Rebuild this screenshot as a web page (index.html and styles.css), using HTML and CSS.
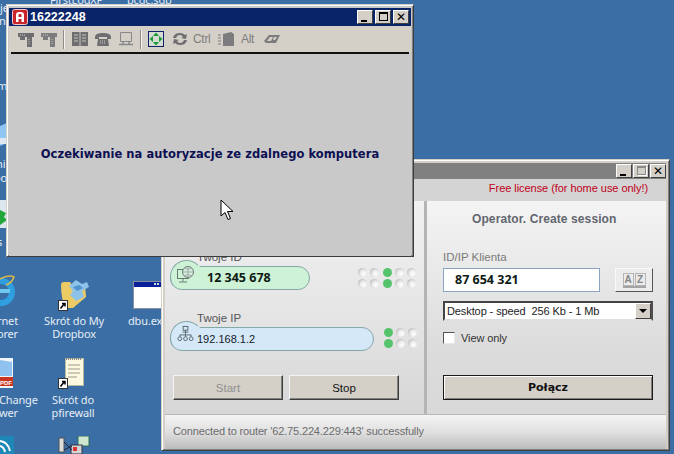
FILE: index.html
```html
<!DOCTYPE html>
<html lang="pl">
<head>
<meta charset="utf-8">
<title>Zdalny pulpit</title>
<link rel="stylesheet" href="styles.css">
</head>
<body>
<div class="desktop">
  <div class="dtext t-top1">FirstLogXP</div>
  <div class="dtext t-top2">bcdc.sdb</div>
  <div class="dtext t-left1">je</div>
  <div class="dtext t-left2">ne</div>
  <div class="dtext t-left3">m</div>
  <div class="dtext t-left4">hi</div>
  <div class="dtext t-left5">oo</div>
  <div class="dtext t-left6">s</div>

  <svg class="dicon i-ie" viewBox="0 0 16 36"><circle cx="1" cy="17" r="11" fill="none" stroke="#2f9fe0" stroke-width="6"/><path d="M-10 16h20" stroke="#6fc8f0" stroke-width="4"/><path d="M-2 5q10-6 16-3-2 6-8 8" fill="none" stroke="#d9b84a" stroke-width="1.500"/></svg>
  <div class="dlabel l-ie">rnet<br>orer</div>

  <svg class="dicon i-box" viewBox="0 0 32 34">
    <path d="M3 7q0-3 3-3h6l2 3h13l1 12-13 11H8q-5-8-5-23z" fill="#eccb64"/>
    <path d="M11 8l7-6 6 4 5-2 2 5-7 4 2 6-8 4-6-6 3-4z" fill="#8dc3e8"/>
    <path d="M15 9l6-2 4 3-6 3z" fill="#4e92cf"/>
    <rect x=".5" y="22.500" width="9" height="10" fill="#fff" stroke="#333"/>
    <path d="M2.500 30.500l4-5M4 25.500h3v3" stroke="#000" fill="none" stroke-width="1.500"/>
  </svg>
  <div class="dlabel l-box">Skrót do My<br>Dropbox</div>

  <svg class="dicon i-dbu" viewBox="0 0 28 30"><rect x=".5" y=".5" width="28" height="27" fill="#fff" stroke="#8a8fa0"/><rect x="1" y="1" width="27" height="5" fill="#0a1f9a"/><rect x="21" y="2" width="2" height="2" fill="#cdd"/><rect x="24" y="2" width="2" height="2" fill="#cdd"/></svg>
  <div class="dlabel l-dbu">dbu.exe</div>

  <svg class="dicon i-pdf" viewBox="0 0 14 30"><path d="M0 0H13V30H0z" fill="#f2f6fb"/><path d="M0 2L12 4V18H0z" fill="#8fc2ee"/><rect x="0" y="19" width="13" height="9" fill="#c9361f"/><text x="0" y="26.500" class="pdf">PDF</text></svg>
  <div class="dlabel l-pdf">Change<br>wer</div>

  <svg class="dicon i-note" viewBox="0 0 26 36">
    <rect x="7.500" y="1.500" width="18" height="27" fill="#fdf8e0" stroke="#b9b9a0"/>
    <path d="M8 2h16" stroke="#888" stroke-dasharray="1 1" stroke-width="2"/>
    <path d="M10 8h12M10 12h12M10 16h12M10 20h9" stroke="#9a9a90"/>
    <rect x=".5" y="21.500" width="9" height="10" fill="#fff" stroke="#333"/>
    <path d="M2.500 29.500l4-5M4 24.500h3v3" stroke="#000" fill="none" stroke-width="1.500"/>
  </svg>
  <div class="dlabel l-note">Skrót do<br>pfirewall</div>

  <svg class="dicon i-net" viewBox="0 0 34 18"><rect x="1" y="2" width="5" height="14" fill="#ddd" stroke="#555"/><rect x="20" y="0" width="11" height="10" fill="#cfe8cf" stroke="#2f6f5a"/><rect x="13" y="9" width="11" height="9" fill="#d4d4d4" stroke="#334"/><rect x="15" y="11" width="4" height="4" fill="#d33"/><path d="M6 6l8 8M6 14l8-4" stroke="#223"/></svg>
  <svg class="dicon i-wifi" viewBox="0 0 14 18"><rect width="14" height="18" fill="#1d87b8"/><path d="M0 5q8 1 10 10M0 10q4 1 5 6" fill="none" stroke="#fff" stroke-width="2"/></svg>
  <svg class="dicon i-shield" viewBox="0 0 7 28"><rect width="7" height="28" fill="#dbe6ee"/><path d="M0 10l6 3-2 4 3 3-7 5z" fill="#22a63a"/></svg>
  <svg class="dicon i-blue" viewBox="0 0 7 26"><path d="M0 4l7-3v20l-7 3z" fill="#8fc7f2"/><path d="M0 16h7v6h-7z" fill="#dfe7f0"/></svg>

  <section class="window main">
    <header class="titlebar tb-main">
      <span class="spacer"></span>
      <span class="winbtns tight">
        <span class="wb"><i class="g-min"></i></span>
        <span class="wb dis"><i class="g-max"></i></span>
        <span class="wb"><i class="g-x">✕</i></span>
      </span>
    </header>
    <div class="license">Free license (for home use only!)</div>
    <div class="panels">
      <div class="panel-left">
        <div class="group g-id">
          <div class="glabel">Twoje ID</div>
          <div class="row">
            <div class="pill green">
              <svg class="pill-icon" viewBox="0 0 24 24"><rect x="3.500" y="8.500" width="11" height="9" fill="none" stroke="#687a72"/><circle cx="14" cy="11" r="5.500" fill="#d8ecdf" stroke="#687a72"/><path d="M14 5.500v11M8.500 11h11M10 7q4 3 8 0M10 15q4-3 8 0" fill="none" stroke="#8a9c94" stroke-width=".7"/><path d="M9 17.500v3M5 21h8" stroke="#687a72"/></svg>
              <span class="idnum">12 345 678</span>
            </div>
            <div class="leds c5">
              <i></i><i></i><i class="on"></i><i></i><i></i>
              <i></i><i></i><i class="on"></i><i></i><i></i>
            </div>
          </div>
        </div>
        <div class="group g-ip">
          <div class="glabel">Twoje IP</div>
          <div class="row">
            <div class="pill blue">
              <svg class="pill-icon net" viewBox="0 0 18 18"><rect x="6.500" y="1.500" width="5" height="4" fill="none" stroke="#56666c"/><path d="M6 7.500h6M9 5.500v5M3 10.500h12v2M3 10.500v2M9 10.500v2" fill="none" stroke="#56666c"/><circle cx="3" cy="14.500" r="2" fill="none" stroke="#56666c"/><circle cx="9" cy="14.500" r="2" fill="none" stroke="#56666c"/><circle cx="15" cy="14.500" r="2" fill="none" stroke="#56666c"/></svg>
              <span class="ipnum">192.168.1.2</span>
            </div>
            <div class="leds c3">
              <i class="on"></i><i></i><i></i>
              <i class="on"></i><i></i><i></i>
            </div>
          </div>
        </div>
        <div class="btnrow">
          <button class="btn disabled">Start</button>
          <button class="btn">Stop</button>
        </div>
      </div>
      <div class="panel-right">
        <h2 class="op-title">Operator. Create session</h2>
        <label class="idlabel">ID/IP Klienta</label>
        <div class="idrow">
          <div class="idinput">87 654 321</div>
          <button class="az"><span class="az-in"><b>A</b><b>Z</b></span></button>
        </div>
        <div class="select">
          <span class="sel-text">Desktop - speed&nbsp; 256 Kb - 1 Mb</span>
          <span class="sel-arrow"><i></i></span>
        </div>
        <div class="check"><span class="box"></span><span>View only</span></div>
        <button class="connect">Połącz</button>
      </div>
    </div>
    <footer class="status">Connected to router '62.75.224.229:443' successfully</footer>
  </section>

  <section class="window remote">
    <header class="titlebar tb-remote">
      <svg class="app-ico" viewBox="0 0 16 16"><rect x=".5" y=".5" width="15" height="15" rx="2" fill="#c9262c" stroke="#f2c9c9"/><path d="M4 13V6q0-3 3-3h2q3 0 3 3v7h-2.500v-3h-3v3zM6.500 8h3V6q0-1-1-1h-1q-1 0-1 1z" fill="#fff"/></svg>
      <span class="wintitle">16222248</span>
      <span class="spacer"></span>
      <span class="winbtns">
        <span class="wb"><i class="g-min"></i></span>
        <span class="wb"><i class="g-max"></i></span>
        <span class="wb"><i class="g-x">✕</i></span>
      </span>
    </header>
    <div class="toolbar">
      <svg class="ti" viewBox="0 0 18 18"><path d="M1 3h16v4h-2v10h-5V7H1z" fill="#6e6e70"/><path d="M3 7h5v3H3z" fill="#6e6e70"/><path d="M3 5h5M12 9v6" stroke="#c8c5bf" stroke-dasharray="1 1"/></svg>
      <svg class="ti" viewBox="0 0 18 18"><path d="M1 3h16v4h-2v10h-5V7H1z" fill="#7c7c7e"/><path d="M3 7h5v3H3z" fill="#7c7c7e"/><path d="M3 5h5M12 9v6" stroke="#c8c5bf" stroke-dasharray="1 1"/></svg>
      <span class="tsep"></span>
      <svg class="ti" viewBox="0 0 18 18"><path d="M1 2h16v14H1z" fill="#6e6e70"/><path d="M9 2v14M3 5h4M3 8h4M3 11h4M11 5h4M11 8h4M11 11h4" stroke="#c8c5bf"/></svg>
      <svg class="ti" viewBox="0 0 18 18"><path d="M1 7q0-4 8-4t8 4v2h-4V7H5v2H1z" fill="#6e6e70"/><path d="M4 9h10l1 7H3z" fill="#6e6e70"/><path d="M6 11h6M6 13h6" stroke="#c8c5bf" stroke-dasharray="1 1"/></svg>
      <svg class="ti" viewBox="0 0 18 18"><path d="M3.500 2.500h11v9h-11z" fill="none" stroke="#88888a"/><path d="M2 14.500h14M6 12v2M12 12v2" stroke="#88888a" stroke-width="1.500"/></svg>
      <span class="tsep"></span>
      <svg class="ti full" viewBox="0 0 16 16"><rect x=".5" y=".5" width="15" height="15" fill="#d4dcd4" stroke="#10206a"/><path d="M8 1.500l3 3.500H5zM8 14.500l3-3.500H5zM1.500 8L5 5v6zM14.500 8L11 5v6z" fill="#1c9a36"/></svg>
      <svg class="ti" viewBox="0 0 18 18"><path d="M2 8q1-5 7-5 3 0 5 2l2-1-1 5-5-1 2-1q-1-2-3-2-3 0-4 3zM16 10q-1 5-7 5-3 0-5-2l-2 1 1-5 5 1-2 1q1 2 3 2 3 0 4-3z" fill="#6e6e70"/></svg>
      <span class="tword ctrl">Ctrl</span>
      <svg class="ti" viewBox="0 0 18 18"><path d="M6 4l8-2 3 2v12H6z" fill="#7c7c7e"/><path d="M1 5h3M1 8h3M1 11h3M1 14h3" stroke="#7c7c7e" stroke-width="1.200"/></svg>
      <span class="tword alt">Alt</span>
      <svg class="ti" viewBox="0 0 18 18"><path d="M1 11l5-6h11l-4 8H3z" fill="#7c7c7e"/><path d="M4 11l3-4h3l-2 4zM11 7h3l-2 3h-2z" fill="#d4d0c8"/></svg>
    </div>
    <div class="rule"></div>
    <div class="waitarea">
      <p class="waitmsg">Oczekiwanie na autoryzacje ze zdalnego komputera</p>
    </div>
    <svg class="cursor" viewBox="0 0 14 22"><path d="M1 1v16l4-3.500 3 7 2.500-1-3-7h5.500z" fill="#fff" stroke="#000"/></svg>
  </section>
</div>
</body>
</html>
```

FILE: styles.css
```css
* { box-sizing: border-box; }
html, body { margin: 0; padding: 0; }
body { width: 674px; height: 454px; overflow: hidden; font-family: "Liberation Sans", Arial, sans-serif; }

.desktop { position: relative; width: 674px; height: 454px; background: #3a6ea5; overflow: hidden; }
.dtext, .dlabel { position: absolute; color: #e6edf5; font: 11px/13px "Noto Sans", sans-serif; letter-spacing: -.15px; white-space: nowrap; }
.dlabel { text-align: center; }
.t-top1 { left: 50px; top: -7px; }
.t-top2 { left: 127px; top: -7px; }
.t-left1 { left: 0; top: 1px; }
.t-left2 { left: -1px; top: 14px; }
.t-left3 { left: -3px; top: 79px; }
.t-left4 { left: -4px; top: 157px; }
.t-left5 { left: -6px; top: 171px; }
.t-left6 { left: -3px; top: 235px; }

.pdf { fill: #fff; font: bold 6px "Liberation Sans", sans-serif; }
.dicon { position: absolute; display: block; }
.i-ie { left: 0; top: 275px; width: 16px; height: 36px; }
.l-ie { left: -14px; top: 314px; width: 32px; text-align: right; }
.i-box { left: 58px; top: 278px; width: 32px; height: 34px; }
.l-box { left: 38px; top: 314px; width: 72px; }
.i-dbu { left: 133px; top: 281px; width: 28px; height: 30px; }
.l-dbu { left: 128px; top: 314px; }
.i-pdf { left: 0; top: 358px; width: 14px; height: 30px; }
.l-pdf { left: -1px; top: 393px; text-align: left; }
.i-note { left: 58px; top: 357px; width: 26px; height: 36px; }
.l-note { left: 46px; top: 393px; width: 54px; }
.i-net { left: 58px; top: 436px; width: 34px; height: 18px; }
.i-wifi { left: 0; top: 436px; width: 14px; height: 18px; }
.i-shield { left: 0; top: 200px; width: 7px; height: 28px; }
.i-blue { left: 0; top: 122px; width: 7px; height: 26px; }

.window { position: absolute; display: flex; flex-direction: column; background: #d4d0c8; border: 1px solid; border-color: #d4d0c8 #404040 #404040 #d4d0c8; box-shadow: inset 1px 1px 0 #fff, inset -1px -1px 0 #808080; }
.main { left: 161px; top: 159px; width: 509px; height: 292px; padding: 3px 3px 1px 3px; }
.remote { left: 6px; top: 4px; width: 408px; height: 253px; background: #c9c9c9; border-color: #d4d0c8 #3c3c3c #3c3c3c #d4d0c8; padding: 3px 2px 0 2px; }

.titlebar { display: flex; align-items: center; flex: none; height: 18px; }
.tb-main { background: #808080; height: 16px; }
.tb-remote { background: #0a246a; padding: 0 2px 0 3px; }
.app-ico { width: 16px; height: 16px; flex: none; margin-right: 2px; }
.wintitle { color: #fff; font: bold 12.500px/16px "Liberation Sans", sans-serif; }
.spacer { flex: 1; }
.winbtns { display: flex; gap: 2px; }
.winbtns.tight { gap: 1px; }
.wb { position: relative; display: block; width: 16px; height: 14px; background: #d4d0c8; border: 1px solid; border-color: #fff #404040 #404040 #fff; }
.wb i { position: absolute; display: block; font-style: normal; }
.g-min { left: 3px; bottom: 1px; width: 6px; height: 2px; background: #000; }
.g-max { left: 3px; top: 1px; width: 9px; height: 9px; border: 1px solid #000; border-top-width: 2px; }
.dis .g-max { border-color: #8a8a8a; box-shadow: 1px 1px 0 #fff; }
.g-x { left: 0; top: 0; width: 14px; text-align: center; font: bold 12px/12px "DejaVu Sans", sans-serif; color: #000; }

.license { flex: none; height: 22px; background: #d4d4d4; color: #c00020; font-size: 11px; line-height: 19px; text-align: right; padding-right: 18px; letter-spacing: -.05px; }

.panels { flex: 1; display: flex; min-height: 0; }
.panel-left { width: 262px; flex: none; background: linear-gradient(#f1f1f1, #e6e6e6 50%, #d6d6d6); display: flex; flex-direction: column; padding: 50px 0 0 5px; border-right: 3px solid #b4b4b4; }
.panel-right { flex: 1; background: linear-gradient(#f4f4f4, #dcdcdc 70%, #d8d8d8); padding: 10px 2px 0 16px; display: flex; flex-direction: column; }

.group { display: flex; flex-direction: column; }
.g-ip { margin-top: 22px; }
.glabel { color: #555; font-size: 11.500px; line-height: 13px; padding-left: 27px; height: 15px; }
.row { display: flex; align-items: center; }
.pill { position: relative; flex: none; display: flex; align-items: center; height: 24px; border: 1px solid #84a8a8; border-radius: 12px; }
.pill::before { content: ""; position: absolute; left: -1px; top: -7px; width: 31px; height: 31px; border: 1px solid #84a8a8; border-radius: 50%; background: inherit; border-right-color: transparent; border-bottom-color: transparent; clip-path: inset(0 0 7px 0); }
.green { width: 140px; background: #cdf2d6; }
.blue { width: 204px; background: #d4e8f8; }
.pill-icon { position: absolute; left: 3px; top: -6px; width: 24px; height: 24px; }
.pill-icon.net { left: 6px; top: -3px; width: 17px; height: 17px; }
.idnum { position: relative; margin-left: 36px; color: #0e1a14; font: bold 12.500px/20px "Open Sans", sans-serif; }
.ipnum { position: relative; margin-left: 26px; color: #15202a; font-size: 11px; line-height: 20px; }
.leds { display: grid; gap: 2px 3.250px; grid-auto-rows: 9px; grid-template-columns: repeat(5, 9px); }
.leds.c5 { margin: -1px 0 0 48px; }
.leds.c3 { margin: -3px 0 0 9.500px; grid-template-columns: repeat(3, 9px); }
.leds i { display: block; width: 9px; height: 9px; border-radius: 50%; background: radial-gradient(circle at 65% 65%, #fff 0, #ececec 40%, #a4a4a4 100%); }
.leds i.on { background: #54c36c; }

.btnrow { display: flex; gap: 6px; margin-top: 24px; padding-left: 3px; }
.btn { width: 110px; height: 25px; padding: 0; background: #d4d0c8; border: 1px solid; border-color: #f4f4f4 #3c3c3c #3c3c3c #f4f4f4; box-shadow: inset -1px -1px 0 #808080; color: #111; font: 11.500px/20px "Liberation Sans", sans-serif; }
.btn.disabled { color: #8f8f8f; }

.op-title { margin: 0; color: #62666e; font: bold 12px/16px "Liberation Sans", sans-serif; padding-left: 29px; letter-spacing: .1px; }
.idlabel { margin-top: 23px; color: #7a7a7a; font-size: 11.500px; line-height: 14px; }
.idrow { display: flex; margin-top: 4px; }
.idinput { width: 157px; height: 24px; border: 1px solid #8aa4c2; background: #fff; color: #0e1a14; font: bold 12.500px/22px "Open Sans", sans-serif; padding-left: 11px; }
.az { width: 38px; height: 24px; margin-left: 15px; padding: 0; background: #ececec; border: 1px solid; border-color: #fafafa #555 #555 #fafafa; display: flex; align-items: center; justify-content: center; }
.az-in { display: flex; gap: 1px; border-bottom: 2px solid #a4a4a4; }
.az b { color: #85858a; width: 11px; font: bold 10px/11px "Liberation Sans", sans-serif; border: 1px solid #b4b4b4; text-align: center; }
.select { display: flex; align-items: center; width: 210px; height: 20px; margin-top: 9px; background: #fff; border: 2px solid; border-color: #444 #505050 #e0e0e0 #444; }
.sel-text { flex: 1; padding-left: 2px; color: #1c1c1c; font-size: 11px; line-height: 16px; letter-spacing: -.1px; white-space: nowrap; }
.sel-arrow { position: relative; display: block; width: 16px; height: 16px; background: #d4d0c8; border: 1px solid; border-color: #fff #404040 #404040 #fff; }
.sel-arrow i { position: absolute; left: 3px; top: 5px; width: 0; height: 0; border: 4px solid transparent; border-top: 4px solid #000; border-bottom: 0; }
.check { display: flex; align-items: center; gap: 6px; margin-top: 10px; color: #333; font-size: 11px; letter-spacing: -.1px; line-height: 14px; }
.box { display: block; width: 12px; height: 12px; background: #fff; border: 1px solid; border-color: #555 #e8e8e8 #e8e8e8 #555; }
.connect { width: 210px; height: 25px; margin-top: 30px; padding: 0; background: #d4d0c8; border: 1px solid #1a1a1a; box-shadow: inset 1px 1px 0 #fff, inset -1px -1px 0 #808080; color: #111; font: bold 11px/20px "DejaVu Sans", sans-serif; }

.status { flex: none; height: 35px; background: linear-gradient(#f4f4f4, #e0e0e0 50%, #bcbcbc); border-top: 1px solid #b8b8b8; color: #6c6c6c; font-size: 11px; letter-spacing: -.15px; line-height: 33px; padding-left: 8px; white-space: nowrap; }

.toolbar { display: flex; align-items: center; flex: none; height: 26px; gap: 5px; padding-left: 8px; background: #d4d0c8; }
.ti { width: 18px; height: 18px; flex: none; display: block; }
.ti.full { width: 16px; height: 16px; margin-right: 2px; }
.tsep { width: 1px; height: 19px; background: #8e8c88; box-shadow: 1px 0 0 #f4f4f4; margin-right: 2px; flex: none; }
.tword { flex: none; color: #7e7e7e; font-size: 12px; line-height: 18px; letter-spacing: -.3px; }
.ctrl { width: 18px; margin: 0 1px 0 -1px; }
.alt { width: 17px; margin-left: 1px; }
.rule { flex: none; height: 2px; background: #111; margin: 0 2px; }
.waitarea { flex: 1; display: flex; align-items: center; justify-content: center; background: #c9c9c9; padding-bottom: 2px; }
.waitmsg { margin: 0; color: #0d1052; font: bold 11.500px/16px "DejaVu Sans", sans-serif; letter-spacing: .05px; }
.cursor { position: absolute; left: 213px; top: 194px; width: 14px; height: 22px; }
```
